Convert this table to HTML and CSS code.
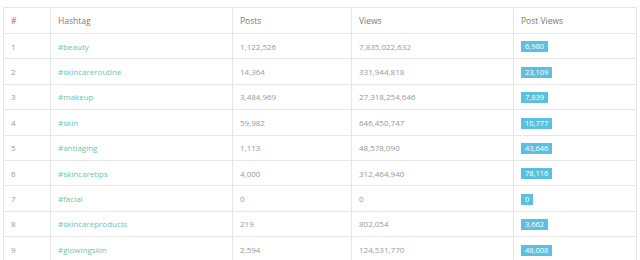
FILE: index.html
```html
<!DOCTYPE html>
<html>
<head>
<meta charset="utf-8">
<link rel="stylesheet" href="styles.css">
</head>
<body>
<table class="tbl">
  <colgroup>
    <col class="c-num"><col class="c-tag"><col class="c-posts"><col class="c-views"><col class="c-pv">
  </colgroup>
  <thead>
    <tr><th>#</th><th>Hashtag</th><th>Posts</th><th>Views</th><th>Post Views</th></tr>
  </thead>
  <tbody>
    <tr><td>1</td><td class="tag">#beauty</td><td>1,122,526</td><td>7,835,022,632</td><td><span class="label">6,980</span></td></tr>
    <tr><td>2</td><td class="tag">#skincareroutine</td><td>14,364</td><td>331,944,818</td><td><span class="label">23,109</span></td></tr>
    <tr><td>3</td><td class="tag">#makeup</td><td>3,484,969</td><td>27,318,254,646</td><td><span class="label">7,839</span></td></tr>
    <tr><td>4</td><td class="tag">#skin</td><td>59,982</td><td>646,450,747</td><td><span class="label">10,777</span></td></tr>
    <tr><td>5</td><td class="tag">#antiaging</td><td>1,113</td><td>48,578,090</td><td><span class="label">43,646</span></td></tr>
    <tr><td>6</td><td class="tag">#skincaretips</td><td>4,000</td><td>312,464,940</td><td><span class="label">78,116</span></td></tr>
    <tr><td>7</td><td class="tag">#facial</td><td>0</td><td>0</td><td><span class="label">0</span></td></tr>
    <tr><td>8</td><td class="tag">#skincareproducts</td><td>219</td><td>802,054</td><td><span class="label">3,662</span></td></tr>
    <tr><td>9</td><td class="tag">#glowingskin</td><td>2,594</td><td>124,531,770</td><td><span class="label">48,008</span></td></tr>
  </tbody>
</table>
</body>
</html>
```
FILE: styles.css
```css
html, body {
  margin: 0;
  background: #fff;
}
body {
  padding: 7px 4px 0 3px;
  font-family: "Open Sans", "DejaVu Sans", sans-serif;
  font-size: 8px;
  line-height: 11px;
  color: #999;
}
.tbl {
  border-collapse: collapse;
  width: 633px;
  table-layout: fixed;
}
.c-num { width: 47px; }
.c-tag { width: 182px; }
.c-posts { width: 119px; }
.c-views { width: 162px; }
.c-pv { width: 123px; }
.tbl th, .tbl td {
  box-sizing: border-box;
  border: 1px solid #e6e6e6;
  text-align: left;
  padding: 0 7px;
  vertical-align: middle;
  white-space: nowrap;
}
.tbl th {
  height: 26px;
  font-size: 8.5px;
  font-weight: 400;
  color: #7a7a7a;
}
.tbl td {
  height: 25.4px;
  font-weight: 400;
}
.tbl td.tag {
  color: #6cc4b4;
}
.label {
  display: inline-block;
  vertical-align: middle;
  background: #5bc0de;
  color: #fff;
  font-size: 7.5px;
  line-height: 11px;
  padding: 0 4px;
}
```
